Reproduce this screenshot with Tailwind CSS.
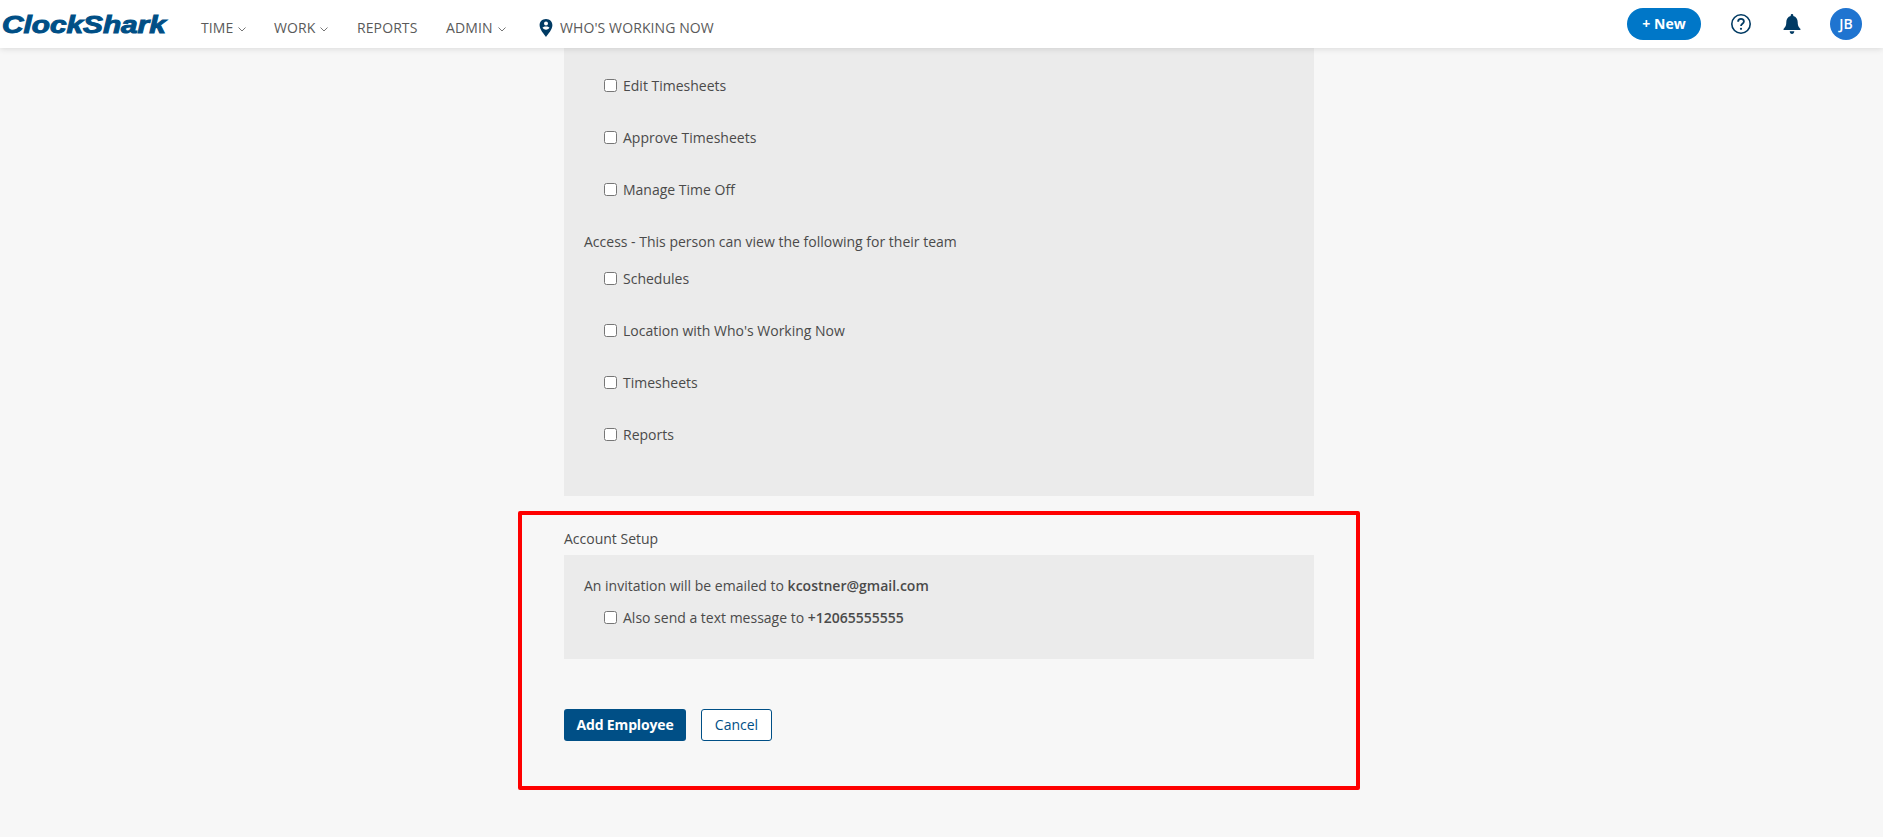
<!DOCTYPE html>
<html lang="en">
<head>
<meta charset="utf-8">
<title>Add Employee</title>
<script src="https://cdn.jsdelivr.net/npm/@tailwindcss/browser@4"></script>
</head>
<body class="bg-[#f7f7f7] font-['Open_Sans',sans-serif] text-sm text-[#4a4a4a]">
  <div class="relative h-[837px] overflow-hidden">
    <!-- Top nav -->
    <header class="relative z-10 flex h-12 items-center justify-between bg-white pl-[2px] pr-[21px] shadow-[0_1px_6px_rgba(0,0,0,0.12)]">
      <div class="flex items-center">
        <span class="mt-[2px] w-[199px]"><span class="inline-block origin-left scale-x-[1.24] font-['Liberation_Sans',sans-serif] text-[24px] leading-none font-bold text-[#004f86] italic [-webkit-text-stroke:1px_#004f86]">ClockShark</span></span>
        <nav class="mt-2 flex items-center text-sm tracking-[0.1px] text-[#5a5a5a]">
          <span class="flex w-[73px] items-center gap-[5px]">TIME
            <svg class="mt-px h-2 w-2" viewBox="0 0 8 8" fill="none" stroke="#666" stroke-width="0.9"><path d="M0.5 2.500 4 6l3.500-3.500"/></svg>
          </span>
          <span class="flex w-[83px] items-center gap-[5px]">WORK
            <svg class="mt-px h-2 w-2" viewBox="0 0 8 8" fill="none" stroke="#666" stroke-width="0.9"><path d="M0.5 2.500 4 6l3.500-3.500"/></svg>
          </span>
          <span class="w-[89px]">REPORTS</span>
          <span class="flex w-[93px] items-center gap-[5px]">ADMIN
            <svg class="mt-px h-2 w-2" viewBox="0 0 8 8" fill="none" stroke="#666" stroke-width="0.9"><path d="M0.5 2.500 4 6l3.500-3.500"/></svg>
          </span>
          <span class="flex items-center gap-[7px]">
            <svg class="h-[18px] w-[14px]" viewBox="0 0 14 18"><path fill="#003a63" fill-rule="evenodd" d="M7 0C3.100 0 .6 2.800.6 6.300c0 4.300 4.300 8.800 6.400 11.700 2.100-2.900 6.400-7.400 6.400-11.700C13.400 2.800 10.900 0 7 0Zm0 2.600a2 2 0 1 1 0 4 2 2 0 0 1 0-4ZM3.500 8.600c.8-.9 2-1.200 3.500-1.200s2.700.3 3.500 1.200c-.6 1.300-2 2.100-3.500 2.100s-2.900-.8-3.500-2.100Z"/></svg>
            WHO'S WORKING NOW
          </span>
        </nav>
      </div>
      <div class="flex items-center">
        <button class="mr-[29px] h-8 w-[74px] rounded-full bg-[#0077c8] text-sm font-bold text-white">+ New</button>
        <svg class="mr-[31px] h-[22px] w-[22px]" viewBox="0 0 22 22" fill="none" stroke="#003a63"><circle cx="11" cy="11" r="9.2" stroke-width="1.6"/><path stroke-width="1.8" d="M8.100 8.700c0-1.700 1.300-2.800 2.900-2.800s2.900 1.100 2.900 2.600c0 2.300-2.900 2.300-2.900 4.500"/><circle cx="11" cy="15.800" r="1.100" fill="#003a63" stroke="none"/></svg>
        <svg class="mr-[29px] h-5 w-[18px]" viewBox="0 0 18 20"><path fill="#003a63" d="M9 0c-.8 0-1.300.6-1.300 1.400v.7C4.900 2.800 3.300 5.200 3.300 8c0 4-1.200 5.200-2.600 6.700-.4.400-.3 1.300.6 1.300h15.400c.9 0 1-.9.6-1.300-1.400-1.500-2.600-2.700-2.600-6.700 0-2.800-1.600-5.200-4.400-5.900v-.7C10.300.6 9.800 0 9 0ZM6.700 17.200c0 1.500 1 2.800 2.300 2.800s2.300-1.300 2.300-2.800H6.700Z"/></svg>
        <span class="flex h-8 w-8 items-center justify-center rounded-full bg-[#1f74d0] text-sm font-semibold text-white">JB</span>
      </div>
    </header>

    <main class="ml-[564px] w-[750px]">
      <!-- Permissions panel, continues above the fold -->
      <section class="bg-[#ebebeb] pt-7 pb-[51px] pl-5">
        <div class="flex flex-col gap-8 pl-5">
          <label class="flex h-5 items-center gap-[6px]"><input type="checkbox" class="-mt-[2px] h-[13px] w-[13px]">Edit Timesheets</label>
          <label class="flex h-5 items-center gap-[6px]"><input type="checkbox" class="-mt-[2px] h-[13px] w-[13px]">Approve Timesheets</label>
          <label class="flex h-5 items-center gap-[6px]"><input type="checkbox" class="-mt-[2px] h-[13px] w-[13px]">Manage Time Off</label>
        </div>
        <p class="mt-8 mb-[17px] h-5 leading-5">Access - This person can view the following for their team</p>
        <div class="flex flex-col gap-8 pl-5">
          <label class="flex h-5 items-center gap-[6px]"><input type="checkbox" class="-mt-[2px] h-[13px] w-[13px]">Schedules</label>
          <label class="flex h-5 items-center gap-[6px]"><input type="checkbox" class="-mt-[2px] h-[13px] w-[13px]">Location with Who's Working Now</label>
          <label class="flex h-5 items-center gap-[6px]"><input type="checkbox" class="-mt-[2px] h-[13px] w-[13px]">Timesheets</label>
          <label class="flex h-5 items-center gap-[6px]"><input type="checkbox" class="-mt-[2px] h-[13px] w-[13px]">Reports</label>
        </div>
      </section>

      <!-- Account setup -->
      <h2 class="mt-[33px] mb-[6px] h-5 leading-5">Account Setup</h2>
      <section class="bg-[#ebebeb] pt-[21px] pb-[31px] pl-5">
        <p class="mb-3 h-5 leading-5">An invitation will be emailed to <b class="font-semibold">kcostner@gmail.com</b></p>
        <label class="ml-5 flex h-5 items-center gap-[6px]"><input type="checkbox" class="-mt-[2px] h-[13px] w-[13px]"><span>Also send a text message to <b class="font-semibold">+12065555555</b></span></label>
      </section>

      <div class="mt-[50px] flex gap-[15px]">
        <button class="h-8 w-[122px] rounded-[3px] bg-[#004f86] text-sm font-bold tracking-[-0.15px] text-white">Add Employee</button>
        <button class="h-8 w-[71px] rounded-[3px] border border-[#004f86] bg-white text-sm font-medium text-[#004f86]">Cancel</button>
      </div>
    </main>

    <!-- Red annotation around the account section -->
    <div class="absolute top-[511px] left-[518px] h-[279px] w-[842px] rounded-[2px] border-4 border-[#fe0000]"></div>
  </div>
</body>
</html>
